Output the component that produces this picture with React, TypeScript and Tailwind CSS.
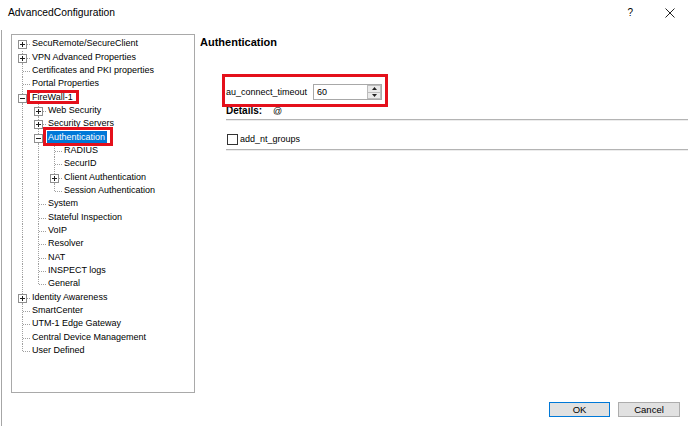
import React from "react";

const ROW_H = 13.35;

type Row = {
  label: string;
  level: number;
  exp?: "+" | "-";
  first?: boolean;
  last?: boolean;
  selected?: boolean;
};

const rows: Row[] = [
  { label: "SecuRemote/SecureClient", level: 0, exp: "+", first: true },
  { label: "VPN Advanced Properties", level: 0, exp: "+" },
  { label: "Certificates and PKI properties", level: 0 },
  { label: "Portal Properties", level: 0 },
  { label: "FireWall-1", level: 0, exp: "-" },
  { label: "Web Security", level: 1, exp: "+" },
  { label: "Security Servers", level: 1, exp: "+" },
  { label: "Authentication", level: 1, exp: "-", selected: true },
  { label: "RADIUS", level: 2 },
  { label: "SecurID", level: 2 },
  { label: "Client Authentication", level: 2, exp: "+" },
  { label: "Session Authentication", level: 2, last: true },
  { label: "System", level: 1 },
  { label: "Stateful Inspection", level: 1 },
  { label: "VoIP", level: 1 },
  { label: "Resolver", level: 1 },
  { label: "NAT", level: 1 },
  { label: "INSPECT logs", level: 1 },
  { label: "General", level: 1, last: true },
  { label: "Identity Awareness", level: 0, exp: "+" },
  { label: "SmartCenter", level: 0 },
  { label: "UTM-1 Edge Gateway", level: 0 },
  { label: "Central Device Management", level: 0 },
  { label: "User Defined", level: 0, last: true },
];

const LINE = "#a0a0a0";

function Connector({ row }: { row: Row }) {
  const L = row.level;
  const w = 16 * (L + 1);
  const mid = 7;
  const lines: React.ReactNode[] = [];
  for (let i = 0; i < L; i++) {
    const x = 16 * i + 8.5;
    lines.push(
      <line key={"a" + i} x1={x} y1={0} x2={x} y2={ROW_H} stroke={LINE} strokeDasharray="1 1" />
    );
  }
  const c = 16 * L + 8.5;
  lines.push(
    <line
      key="v"
      x1={c}
      y1={row.first ? mid : 0}
      x2={c}
      y2={row.last ? mid : ROW_H}
      stroke={LINE}
      strokeDasharray="1 1"
    />
  );
  lines.push(
    <line key="h" x1={c} y1={mid + 0.5} x2={16 * L + 16} y2={mid + 0.5} stroke={LINE} strokeDasharray="1 1" />
  );
  if (row.exp) {
    const px = 16 * L + 4;
    const py = mid - 4;
    lines.push(
      <g key="e">
        <rect x={px + 0.5} y={py + 0.5} width={8} height={8} fill="#fff" stroke="#8f8f8f" />
        <rect x={px + 2} y={py + 4} width={5} height={1} fill="#1e1e1e" />
        {row.exp === "+" && <rect x={px + 4} y={py + 2} width={1} height={5} fill="#1e1e1e" />}
      </g>
    );
  }
  return (
    <svg width={w} height={ROW_H} className="shrink-0" shapeRendering="crispEdges">
      {lines}
    </svg>
  );
}

function TreeRow({ row }: { row: Row }) {
  return (
    <div className="flex items-center h-[13.35px]">
      <Connector row={row} />
      <span
        className={
          "ml-[1px] px-[1px] leading-[13.35px] whitespace-nowrap " +
          (row.selected ? "bg-[#0078d7] text-white pr-[2px]" : "text-black")
        }
      >
        {row.label}
      </span>
    </div>
  );
}

export default function App() {
  return (
    <div
      className="relative w-[688px] h-[426px] bg-white overflow-hidden text-black"
      style={{ fontFamily: '"Liberation Sans", Arial, sans-serif' }}
    >
      {/* Title bar */}
      <div className="h-[30px] flex items-start pt-[6px] pl-[8px] pr-[13px]">
        <span className="text-[10.3px] leading-[14px]">AdvancedConfiguration</span>
        <div className="flex-1" />
        <span className="text-[10px] leading-[14px] mr-[32px]">?</span>
        <svg width="10" height="10" className="mt-[2px]" viewBox="0 0 10 10">
          <path d="M0.5 0.5 L9.5 9.5 M9.5 0.5 L0.5 9.5" stroke="#222" strokeWidth="1" />
        </svg>
      </div>

      {/* Body */}
      <div className="ml-[1px] border-l border-[#a6a6a6] h-[396px] flex flex-col">
        <div className="flex">
          {/* Tree */}
          <div className="ml-[9px] mt-[4px] w-[184px] h-[359px] border border-[#a9a9a9] pl-[2px] pt-[2.2px] text-[9px]">
            {rows.map((r) => (
              <TreeRow key={r.label} row={r} />
            ))}
          </div>

          {/* Right panel */}
          <div className="flex-1 flex flex-col pt-[5.5px]">
            <div className="ml-[5px] h-[13px] text-[11px] leading-[13px] font-bold">Authentication</div>

            <div className="ml-[31px] mt-[35.5px] h-[16px] flex items-center text-[9px]">
              <span className="w-[87px] leading-[16px]">au_connect_timeout</span>
              <div className="w-[69px] h-[16px] border border-[#a8a8a8] flex items-center bg-white">
                <span className="flex-1 pl-[3px] leading-[14px]">60</span>
                <div className="w-[14px] h-[14px] flex flex-col">
                  <div className="flex-1 bg-[#eaeaea] border border-[#bcbcbc] flex items-center justify-center">
                    <svg width="5" height="3" viewBox="0 0 5 3">
                      <path d="M2.5 0 L5 3 L0 3 Z" fill="#222" />
                    </svg>
                  </div>
                  <div className="flex-1 bg-[#eaeaea] border border-t-0 border-[#bcbcbc] flex items-center justify-center">
                    <svg width="5" height="3" viewBox="0 0 5 3">
                      <path d="M0 0 L5 0 L2.5 3 Z" fill="#222" />
                    </svg>
                  </div>
                </div>
              </div>
            </div>

            <div className="ml-[31px] mt-[4.5px] h-[12px] flex items-center text-[10px] leading-[12px]">
              <span className="font-bold w-[47px]">Details:</span>
              <span className="text-[9px]">@</span>
            </div>
            <div className="ml-[31px] mt-[2.5px] h-0 border-t border-[#b4b4b4] border-b border-b-[#ececec]" />

            <div className="ml-[31px] mt-[10px] h-[16px] flex items-center text-[9px]">
              <div className="ml-[1px] w-[11px] h-[11px] border border-[#333] bg-white" />
              <span className="ml-[2px] leading-[16px]">add_nt_groups</span>
            </div>
            <div className="ml-[31px] mt-[2px] h-0 border-t border-[#b4b4b4] border-b border-b-[#ececec]" />
          </div>
        </div>

        {/* Buttons */}
        <div className="mt-[9px] flex justify-end gap-[8px] pr-[8px] text-[9.5px]">
          <button className="w-[61px] h-[15px] bg-[#e1e1e1] border border-[#0078d7] leading-[13px] text-black">
            OK
          </button>
          <button className="w-[62px] h-[15px] bg-[#e1e1e1] border border-[#adadad] leading-[13px] text-black">
            Cancel
          </button>
        </div>
      </div>

      {/* Red annotation boxes */}
      <div className="absolute left-[27px] top-[90px] w-[52px] h-[14px] border-[3px] border-[#e4101b]" />
      <div className="absolute left-[43px] top-[127px] w-[70px] h-[19px] border-[3px] border-[#e4101b]" />
      <div className="absolute left-[222px] top-[74px] w-[166px] h-[33px] border-[3px] border-[#e4101b]" />
    </div>
  );
}
